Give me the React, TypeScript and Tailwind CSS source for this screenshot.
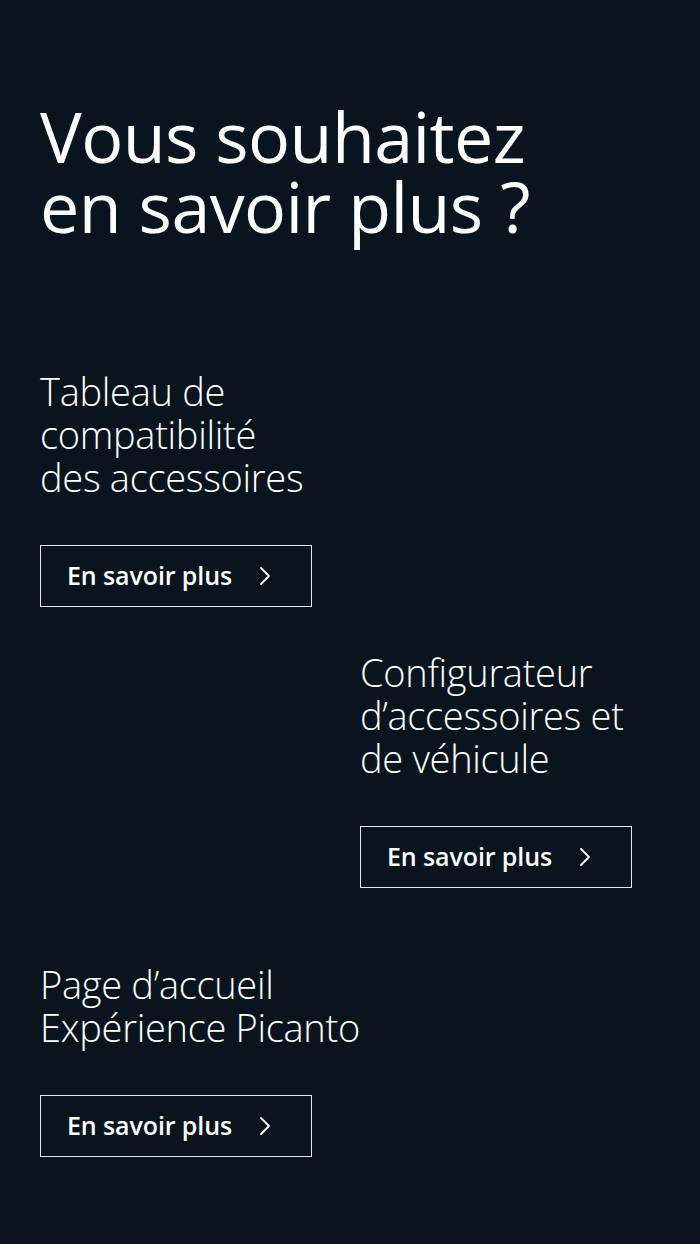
interface LinkBlock {
  key: string;
  lines: string[];
  right?: boolean;
  mt: string;
}

const BLOCKS: LinkBlock[] = [
  { key: 'compat', lines: ['Tableau de', 'compatibilité', 'des accessoires'], mt: 'mt-[129px]' },
  { key: 'config', lines: ['Configurateur', 'd’accessoires et', 'de véhicule'], right: true, mt: 'mt-[44px]' },
  { key: 'picanto', lines: ['Page d’accueil', 'Expérience Picanto'], mt: 'mt-[75px]' },
];

function Chevron() {
  return (
    <svg width="12" height="20" viewBox="0 0 12 20" fill="none" aria-hidden="true">
      <polyline points="2,2 10,10 2,18" stroke="currentColor" strokeWidth="1.8" strokeLinecap="round" strokeLinejoin="round" />
    </svg>
  );
}

function MoreButton() {
  return (
    <a
      href="#"
      className="flex items-center h-[62px] w-[272px] border border-white/90 pl-[26px] text-white text-[25px] font-semibold tracking-[-0.1px]"
    >
      <span>En savoir plus</span>
      <span className="ml-[27px] flex items-center">
        <Chevron />
      </span>
    </a>
  );
}

export default function App() {
  return (
    <div
      className="min-h-[1244px] w-full bg-[#0a141f] text-white px-10 pt-[101px] pb-[86px]"
      style={{ fontFamily: '"Open Sans", "Noto Sans", sans-serif' }}
    >
      <h1 className="text-[70px] leading-[70px] font-normal tracking-[-0.6px]">
        Vous souhaitez
        <br />
        en savoir plus ?
      </h1>

      <div className="flex flex-col">
        {BLOCKS.map((b) => (
          <div key={b.key} className={`${b.mt} ${b.right ? 'ml-[320px]' : ''}`}>
            <h2 className="text-[38px] leading-[43px] font-light tracking-[-0.3px]">
              {b.lines.map((l, i) => (
                <span key={i} className="block whitespace-nowrap">
                  {l}
                </span>
              ))}
            </h2>
            <div className="mt-[46px]">
              <MoreButton />
            </div>
          </div>
        ))}
      </div>
    </div>
  );
}
